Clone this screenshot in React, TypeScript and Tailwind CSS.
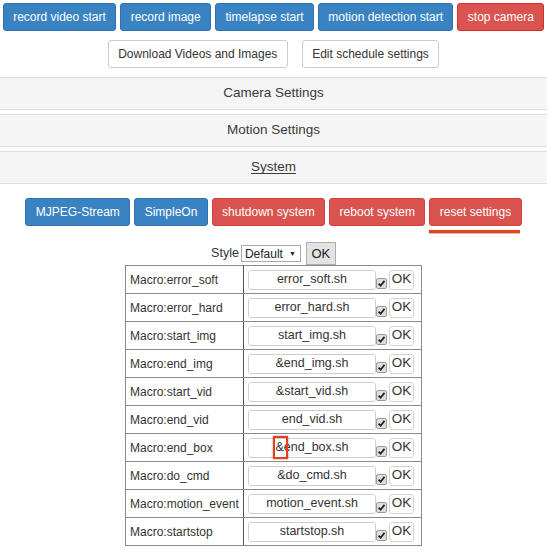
import React from "react";

type V = "primary" | "danger" | "danger2" | "default";

function Btn({ v, children }: { v: V; children: React.ReactNode }) {
  const cls =
    v === "primary"
      ? "bg-[#3a83c3] border-[#2f70ad] text-white"
      : v === "danger"
      ? "bg-[#d9534f] border-[#d43f3a] text-white"
      : v === "danger2"
      ? "bg-[#d9534f] border-[#dc2a26] text-white"
      : "bg-white border-[#ccc] text-[#333]";
  return (
    <div
      className={`inline-flex items-center justify-center h-[28px] px-[9.4px] border rounded-[3px] text-[12px] whitespace-nowrap ${cls}`}
    >
      {children}
    </div>
  );
}

function Panel({ children }: { children: React.ReactNode }) {
  return (
    <div className="h-[33px] border-y border-[#dddddd] bg-[#f5f5f5] flex items-center justify-center text-[13.5px] text-[#3a3a3a]">
      {children}
    </div>
  );
}

function Check() {
  return (
    <svg width="11" height="11" viewBox="0 0 11 11" className="block">
      <rect x="0.5" y="0.5" width="10" height="10" rx="1.5" fill="#dedede" stroke="#9a9a9a" />
      <path d="M2.6 5.6 L4.6 7.7 L8.5 2.9" fill="none" stroke="#1f1f1f" strokeWidth="1.7" />
    </svg>
  );
}

const rows: { name: string; file: React.ReactNode }[] = [
  { name: "Macro:error_soft", file: "error_soft.sh" },
  { name: "Macro:error_hard", file: "error_hard.sh" },
  { name: "Macro:start_img", file: "start_img.sh" },
  { name: "Macro:end_img", file: "&end_img.sh" },
  { name: "Macro:start_vid", file: "&start_vid.sh" },
  { name: "Macro:end_vid", file: "end_vid.sh" },
  {
    name: "Macro:end_box",
    file: (
      <>
        <span className="relative">
          &amp;
          <span className="absolute left-[-3px] right-[-4px] top-[-2px] bottom-[-2px] border-2 border-[#ea3d1a] shadow-[0_0_2px_rgba(0,0,0,0.4)]" />
        </span>
        end_box.sh
      </>
    ),
  },
  { name: "Macro:do_cmd", file: "&do_cmd.sh" },
  { name: "Macro:motion_event", file: "motion_event.sh" },
  { name: "Macro:startstop", file: "startstop.sh" },
];

export default function App() {
  return (
    <div className="w-[547px] h-[555px] overflow-hidden bg-white font-['Liberation_Sans',Arial,sans-serif] text-[#333]">
      <div className="pt-[3px] flex justify-center gap-[4px]">
        <Btn v="primary">record video start</Btn>
        <Btn v="primary">record image</Btn>
        <Btn v="primary">timelapse start</Btn>
        <Btn v="primary">motion detection start</Btn>
        <Btn v="danger2">stop camera</Btn>
      </div>
      <div className="mt-[9px] flex justify-center gap-[14px]">
        <Btn v="default">Download Videos and Images</Btn>
        <Btn v="default">Edit schedule settings</Btn>
      </div>
      <div className="mt-[9px] flex flex-col gap-[4px]">
        <Panel>Camera Settings</Panel>
        <Panel>Motion Settings</Panel>
        <Panel>
          <span className="underline underline-offset-2">System</span>
        </Panel>
      </div>
      <div className="mt-[14px] flex justify-center gap-[4px]">
        <Btn v="primary">MJPEG-Stream</Btn>
        <Btn v="primary">SimpleOn</Btn>
        <Btn v="danger">shutdown system</Btn>
        <Btn v="danger">reboot system</Btn>
        <div className="relative">
          <Btn v="danger">reset settings</Btn>
          <div className="absolute left-0 right-[2px] top-[32px] h-[3px] bg-[#f23d14] shadow-[0_1px_1px_rgba(0,0,0,0.25)]" />
        </div>
      </div>
      <div className="mt-[16px] h-[23px] flex justify-center items-center">
        <span className="text-[12.5px] text-[#333]">Style</span>
        <div className="ml-[2px] w-[60px] h-[17px] border border-[#a9a9a9] bg-white flex items-center pl-[3px] pr-[4px] text-[12px] text-[#222]">
          <span>Default</span>
          <span className="ml-auto text-[7px] leading-none">▼</span>
        </div>
        <div className="ml-[5px] w-[30px] h-[23px] border border-[#adadad] bg-[#e3e3e3] flex items-center justify-center text-[13px] text-[#222]">
          OK
        </div>
      </div>
      <table className="mx-auto border-collapse">
        <tbody>
          {rows.map((r) => (
            <tr key={r.name}>
              <td className="w-[118px] h-[28px] p-0 pl-[4px] border border-[#8a8a8a] border-r-[#555] text-[12px] text-[#333] whitespace-nowrap">
                {r.name}
              </td>
              <td className="w-[178px] h-[28px] p-0 pl-[4px] pr-[6px] border border-[#8a8a8a] border-l-[#555]">
                <div className="flex items-end">
                  <div className="w-[128px] h-[20px] border border-[#cfcfcf] rounded-[3px] bg-white flex items-center justify-center text-[12.5px] text-[#333] whitespace-nowrap">
                    {r.file}
                  </div>
                  <div className="mb-[1px]">
                    <Check />
                  </div>
                  <div className="ml-[2px] w-[25px] h-[20px] border border-[#d4d4d4] rounded-[3px] bg-white flex items-center justify-center text-[13.5px] text-[#333]">
                    OK
                  </div>
                </div>
              </td>
            </tr>
          ))}
        </tbody>
      </table>
    </div>
  );
}
